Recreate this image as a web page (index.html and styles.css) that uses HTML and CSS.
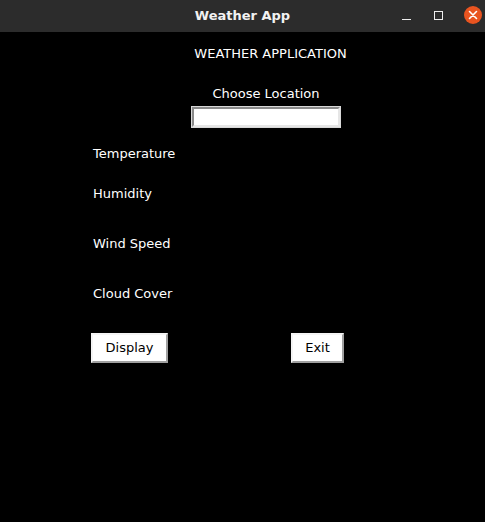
FILE: index.html
```html
<!DOCTYPE html>
<html>
<head>
<meta charset="utf-8">
<link rel="stylesheet" href="styles.css">
</head>
<body>
<div class="window">
  <div class="titlebar">
    <div class="spacer"></div>
    <div class="title">Weather App</div>
    <div class="controls">
      <span class="ctl min"></span>
      <span class="ctl max"></span>
      <span class="ctl close">
        <svg width="18" height="18" viewBox="0 0 18 18"><path d="M5.5 5.5 L12.5 12.5 M12.5 5.5 L5.5 12.5" stroke="#fff" stroke-width="1.6" stroke-linecap="round"/></svg>
      </span>
    </div>
  </div>
  <div class="app">
    <div class="top">
      <div class="heading">WEATHER APPLICATION</div>
      <div class="choose">Choose Location</div>
      <div class="entry"></div>
    </div>
    <div class="fields">
      <div class="field f-temp">Temperature</div>
      <div class="field f-hum">Humidity</div>
      <div class="field f-wind">Wind Speed</div>
      <div class="field f-cloud">Cloud Cover</div>
    </div>
    <div class="buttons">
      <div class="btn btn-display">Display</div>
      <div class="btn btn-exit">Exit</div>
    </div>
  </div>
</div>
</body>
</html>
```
FILE: styles.css
```css
html, body {
  margin: 0;
  padding: 0;
  background: #000;
}
.window {
  width: 485px;
  height: 522px;
  display: flex;
  flex-direction: column;
  font-family: "DejaVu Sans", sans-serif;
  font-size: 13px;
  line-height: 16px;
}
.titlebar {
  height: 32px;
  background: #2c2c2c;
  display: grid;
  grid-template-columns: 1fr auto 1fr;
  align-items: center;
}
.title {
  color: #f2f2f2;
  font-weight: bold;
  font-size: 13px;
  padding-left: 0;
}
.controls {
  display: flex;
  justify-content: flex-end;
  align-items: center;
  padding-right: 3px;
}
.ctl {
  display: block;
}
.min {
  width: 9px;
  height: 1px;
  background: #eee;
  margin-top: 7px;
  margin-right: 23px;
}
.max {
  width: 7px;
  height: 7px;
  border: 1px solid #eee;
  margin-right: 21px;
  margin-top: -2px;
}
.close {
  width: 18px;
  height: 18px;
  border-radius: 50%;
  background: #e95420;
  margin-top: -3px;
}
.close svg {
  display: block;
}
.app {
  flex: 1;
  background: #000;
  color: #fff;
}
.top {
  display: flex;
  flex-direction: column;
  align-items: center;
  width: 150px;
  margin-left: 191px;
}
.heading {
  white-space: nowrap;
  margin-top: 14px;
  padding-left: 9px;
}
.choose {
  white-space: nowrap;
  margin-top: 24px;
}
.entry {
  margin-top: 5px;
  margin-bottom: 1px;
  width: 144px;
  height: 16px;
  background: #fff;
  border: 2px solid;
  border-color: #8a8a8a #e6e6e6 #e6e6e6 #8a8a8a;
  outline: 1px solid #d9d9d9;
}
.fields {
  padding-left: 93px;
  display: flex;
  flex-direction: column;
}
.f-temp { margin-top: 18px; }
.f-hum { margin-top: 24px; }
.f-wind { margin-top: 34px; }
.f-cloud { margin-top: 34px; }
.buttons {
  display: flex;
  padding-left: 91px;
  margin-top: 31px;
}
.btn {
  height: 26px;
  line-height: 26px;
  background: #fff;
  color: #000;
  text-align: center;
  border: 2px solid;
  border-color: #f4f4f4 #a0a0a0 #a0a0a0 #f4f4f4;
}
.btn-display {
  width: 73px;
}
.btn-exit {
  width: 49px;
  margin-left: 123px;
}
```
